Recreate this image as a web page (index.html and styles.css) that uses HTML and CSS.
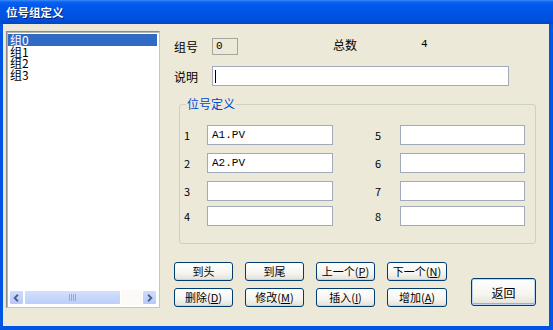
FILE: index.html
```html
<!DOCTYPE html>
<html lang="zh-CN">
	<head>
		<meta charset="utf-8" />
		<title>位号组定义</title>
		<link rel="stylesheet" href="styles.css">
	</head>
	<body>
		<div class="window">
			<div class="titlebar">
				<span class="title">位号组定义</span>
			</div>
			<div class="client">
				<div class="listbox">
					<ul class="items">
						<li class="selected">组0</li>
						<li>组1</li>
						<li>组2</li>
						<li>组3</li>
					</ul>
					<div class="hscroll">
						<span class="sb-btn">
							<svg width="14" height="14" viewBox="0 0 14 14">
								<path d="M8.5 3.5 L5 7 L8.5 10.5" fill="none" stroke="#4d6185" stroke-width="2" />
							</svg>
						</span>
						<span class="sb-thumb"><span class="grip"></span></span>
						<span class="sb-track"></span>
						<span class="sb-btn">
							<svg width="14" height="14" viewBox="0 0 14 14">
								<path d="M5.5 3.5 L9 7 L5.5 10.5" fill="none" stroke="#4d6185" stroke-width="2" />
							</svg>
						</span>
					</div>
				</div>

				<div class="panel">
					<div class="row-top">
						<span class="label">组号</span>
						<span class="readonly">0</span>
						<span class="total-label">总数</span>
						<span class="total">4</span>
					</div>
					<div class="row-desc">
						<span class="label">说明</span>
						<span class="field wide"><span class="caret"></span></span>
					</div>

					<div class="group">
						<span class="group-title">位号定义</span>
						<div class="tags">
							<span class="num">1</span><span class="field">A1.PV</span>
							<span></span>
							<span class="num">5</span><span class="field"></span>
							<span class="num">2</span><span class="field">A2.PV</span>
							<span></span>
							<span class="num">6</span><span class="field"></span>
							<span class="num">3</span><span class="field"></span>
							<span></span>
							<span class="num">7</span><span class="field"></span>
							<span class="num">4</span><span class="field"></span>
							<span></span>
							<span class="num">8</span><span class="field"></span>
						</div>
					</div>

					<div class="actions">
						<div class="nav">
							<button class="btn">到头</button>
							<button class="btn">到尾</button>
							<button class="btn">上一个(<u>P</u>)</button>
							<button class="btn">下一个(<u>N</u>)</button>
							<button class="btn">删除(<u>D</u>)</button>
							<button class="btn">修改(<u>M</u>)</button>
							<button class="btn">插入(<u>I</u>)</button>
							<button class="btn">增加(<u>A</u>)</button>
						</div>
						<button class="btn default">返回</button>
					</div>
				</div>
			</div>
		</div>
	</body>
</html>
```

FILE: styles.css
```css
body {
	margin: 0;
	background: #ece9d8;
	font-family: "Noto Sans CJK SC", "DejaVu Sans", sans-serif;
	font-size: 12px;
	color: #000000;
}

.window {
	width: 553px;
	height: 330px;
	display: flex;
	flex-direction: column;
	background: #0055e5;
}

.titlebar {
	height: 24px;
	flex: none;
	display: flex;
	align-items: center;
	padding-left: 6px;
	background: linear-gradient(#3b8cf8 0, #0a62f0 2px, #0058ee 6px, #0054e3 14px, #0050dc 20px, #0044c8 24px);
}

.title {
	color: #ffffff;
	font-weight: bold;
	font-size: 11.5px;
	text-shadow: 1px 1px 0 #0a1e6e;
}

.client {
	flex: 1;
	display: flex;
	margin: 0 4px 4px 3px;
	padding: 7px 0 0 3px;
	background: #ece9d8;
}

/* list */

.listbox {
	width: 154px;
	height: 277px;
	box-sizing: border-box;
	display: flex;
	flex-direction: column;
	border: 1px solid #8a8a86;
	border-right-color: #c8c6bc;
	border-bottom-color: #c8c6bc;
	box-shadow: inset 1px 1px 0 #b8b6ac;
	background: #ffffff;
}

.items {
	flex: 1;
	list-style: none;
	margin: 0;
	padding: 2px 2px 0 1px;
}

.items li {
	height: 11.5px;
	line-height: 11.5px;
	padding-left: 2px;
	font-size: 12px;
}

.items li.selected {
	background: #316ac5;
	color: #ffffff;
}

.hscroll {
	display: flex;
	height: 15px;
	margin: 0 2px 2px 2px;
}

.sb-btn {
	width: 15px;
	display: flex;
	align-items: center;
	justify-content: center;
	box-sizing: border-box;
	border: 1px solid #ffffff;
	border-radius: 2px;
	background: linear-gradient(#cfdcfd, #b5c9f8);
}

.sb-thumb {
	width: 97px;
	box-sizing: border-box;
	display: flex;
	align-items: center;
	justify-content: center;
	border: 1px solid #ffffff;
	border-radius: 2px;
	background: linear-gradient(#d2dffd, #bccff9);
}

.grip {
	width: 7px;
	height: 7px;
	background: repeating-linear-gradient(90deg, #8da8e4 0, #8da8e4 1px, transparent 1px, transparent 2px);
}

.sb-track {
	flex: 1;
	background: #fbfaf6;
}

/* right panel */

.panel {
	width: 379px;
	margin-left: 10px;
	padding-top: 7px;
	display: flex;
	flex-direction: column;
}

.label {
	width: 38px;
	padding-left: 4px;
	flex: none;
}

.row-top {
	display: flex;
	align-items: center;
	height: 17px;
}

.readonly {
	width: 26px;
	height: 17px;
	box-sizing: border-box;
	border: 1px solid #a7a69b;
	padding-left: 3px;
	line-height: 15px;
	font-family: "Liberation Mono", monospace;
	font-size: 11px;
}

.total-label {
	margin-left: 95px;
	align-self: flex-start;
	line-height: 13px;
}

.total {
	margin-left: 64px;
	align-self: flex-start;
	line-height: 13px;
	font-family: "Liberation Mono", monospace;
	font-size: 11px;
}

.row-desc {
	display: flex;
	align-items: center;
	margin-top: 11px;
}

.field {
	height: 20px;
	box-sizing: border-box;
	border: 1px solid #9fabbc;
	background: #ffffff;
	padding: 0 4px;
	display: flex;
	align-items: center;
	font-family: "Liberation Mono", monospace;
	font-size: 11px;
}

.field.wide {
	width: 297px;
	padding-left: 2px;
}

.caret {
	width: 1px;
	height: 13px;
	background: #000000;
}

/* group box */

.group {
	position: relative;
	margin: 18px 0 0 9px;
	width: 357px;
	box-sizing: border-box;
	border: 1px solid #d0d0bf;
	border-radius: 3px;
	padding: 20px 0 17px 4px;
}

.group-title {
	position: absolute;
	top: -8px;
	left: 6px;
	padding: 0 1px;
	line-height: 14px;
	background: #ece9d8;
	color: #0046d5;
}

.tags {
	display: grid;
	grid-template-columns: 23px 126px 42px 25px 125px;
	grid-template-rows: 28px 28px 25px 20px;
	align-items: start;
}

.num {
	line-height: 20px;
	font-size: 11px;
}

/* buttons */

.actions {
	display: flex;
	margin-top: 18px;
	padding-left: 4px;
}

.nav {
	display: grid;
	grid-template-columns: 59px 59px 59px 60px;
	grid-auto-rows: 19px;
	column-gap: 12px;
	row-gap: 7px;
}

.btn {
	margin: 0;
	padding: 0;
	border: 1px solid #003c74;
	border-radius: 3px;
	background: linear-gradient(#ffffff, #f5f4ef 60%, #e3e0d6);
	box-shadow: inset 0 -1px 0 #d6d0c5;
	font-family: "Noto Sans CJK SC", sans-serif;
	font-size: 11px;
	line-height: 17px;
	color: #000000;
}

.btn u {
	text-underline-offset: 1px;
}

.btn.default {
	width: 65px;
	height: 28px;
	margin: 0 0 1px 24px;
	align-self: flex-end;
	box-shadow: inset 0 0 0 1px #bcd2f6, inset 0 -2px 0 #8fb1ec;
	font-size: 12px;
}
```
